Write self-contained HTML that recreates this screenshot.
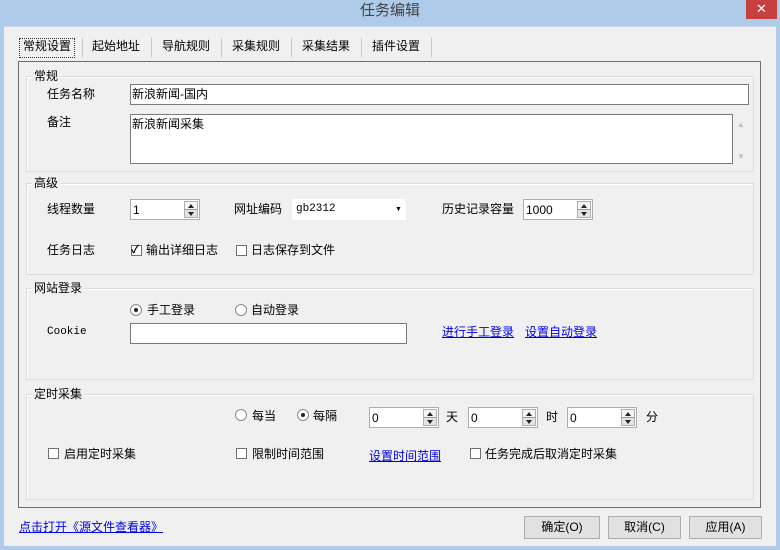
<!DOCTYPE html>
<html><head><meta charset="utf-8"><style>
*{box-sizing:border-box;margin:0;padding:0}
body{width:780px;height:550px;position:relative;overflow:hidden;background:#aecbea;font-family:"Liberation Sans","Noto Sans CJK SC","WenQuanYi Zen Hei",sans-serif;font-size:12px;color:#000}
.a{position:absolute;white-space:nowrap;line-height:14px}
#client{position:absolute;left:4px;top:26px;width:772px;height:520px;background:#f0f0f0;border-top:1px solid #c9d9ec}
.grp{position:absolute;border:1px solid #dcdcdc;box-shadow:inset 1px 1px 0 #fff}
.lab{position:absolute;background:#f0f0f0;padding:0 2px;line-height:14px}
.inp{position:absolute;background:#fff;border:1px solid #7a7a7a;padding:2px 1px;line-height:14px}
.spin{position:absolute;background:#fff;border:1px solid #abadb3;height:21px;padding:3px 2px;line-height:14px}
.spin b{position:absolute;right:1px;top:1px;width:14px;height:17px;background:linear-gradient(#f4f4f4 0 48%,#999 48% 52%,#e4e4e4 52%);border:1px solid #b0b0b0}
.spin b::before{content:"";position:absolute;left:3px;top:2px;border-left:3px solid transparent;border-right:3px solid transparent;border-bottom:4px solid #222}
.spin b::after{content:"";position:absolute;left:3px;top:10px;border-left:3px solid transparent;border-right:3px solid transparent;border-top:4px solid #222}
.cb{position:absolute;width:11px;height:11px;border:1px solid #707070;background:#fff}
.rb{position:absolute;width:12px;height:12px;border:1px solid #8a8a8a;border-radius:50%;background:#fff}
.rb.on::after{content:"";position:absolute;left:3px;top:3px;width:4px;height:4px;border-radius:50%;background:#222}
.lnk{color:#0000ee;text-decoration:underline}
.btn{position:absolute;height:23px;border:1px solid #adadad;background:#e1e1e1;text-align:center;line-height:21px}
.tab{position:absolute;top:38px;line-height:16px}
.sep{position:absolute;top:38px;width:1px;height:19px;background:#c8c8c8}
</style></head><body>
<div class="a" style="left:360px;top:2px;font-size:15px;color:#444;line-height:18px">任务编辑</div>
<div style="position:absolute;left:746px;top:0;width:31px;height:19px;background:#c7403f;color:#fff;text-align:center;font-size:13px;line-height:18px">✕</div>
<div id="client"></div>
<div class="a" style="left:19px;top:38px;width:56px;height:20px;border:1px dotted #333;"></div>
<div class="tab" style="left:23px">常规设置</div>
<div class="sep" style="left:82px"></div>
<div class="tab" style="left:92px">起始地址</div>
<div class="sep" style="left:151px"></div>
<div class="tab" style="left:162px">导航规则</div>
<div class="sep" style="left:221px"></div>
<div class="tab" style="left:232px">采集规则</div>
<div class="sep" style="left:291px"></div>
<div class="tab" style="left:302px">采集结果</div>
<div class="sep" style="left:361px"></div>
<div class="tab" style="left:372px">插件设置</div>
<div class="sep" style="left:431px"></div>
<div style="position:absolute;left:18px;top:61px;width:743px;height:447px;border:1px solid #6f6f6f"></div>
<div class="grp" style="left:26px;top:76px;width:728px;height:96px"></div>
<div class="lab" style="left:32px;top:69px">常规</div>
<div class="grp" style="left:26px;top:183px;width:728px;height:92px"></div>
<div class="lab" style="left:32px;top:176px">高级</div>
<div class="grp" style="left:26px;top:288px;width:728px;height:92px"></div>
<div class="lab" style="left:32px;top:281px">网站登录</div>
<div class="grp" style="left:26px;top:394px;width:728px;height:106px"></div>
<div class="lab" style="left:32px;top:387px">定时采集</div>
<div class="a" style="left:47px;top:87px">任务名称</div>
<div class="inp" style="left:130px;top:84px;width:619px;height:21px">新浪新闻-国内</div>
<div class="a" style="left:47px;top:115px">备注</div>
<div class="inp" style="left:130px;top:114px;width:603px;height:50px">新浪新闻采集</div>
<div class="a" style="left:737px;top:118px;color:#c0c0c0;font-size:8px">▲</div>
<div class="a" style="left:737px;top:150px;color:#c0c0c0;font-size:8px">▼</div>
<div class="a" style="left:47px;top:202px">线程数量</div>
<div class="spin" style="left:130px;top:199px;width:70px">1<b></b></div>
<div class="a" style="left:234px;top:202px">网址编码</div>
<div style="position:absolute;left:292px;top:199px;width:114px;height:21px;background:#fff"></div>
<div class="a" style="left:296px;top:202px;font-size:11px;font-family:'Liberation Mono',monospace">gb2312</div>
<div class="a" style="left:395px;top:203px;font-size:7px">▼</div>
<div class="a" style="left:442px;top:202px">历史记录容量</div>
<div class="spin" style="left:523px;top:199px;width:70px">1000<b></b></div>
<div class="a" style="left:47px;top:243px">任务日志</div>
<div class="cb" style="left:131px;top:245px"></div>
<div class="a" style="left:131px;top:243px;font-size:11px;font-weight:bold">✓</div>
<div class="a" style="left:146px;top:243px">输出详细日志</div>
<div class="cb" style="left:236px;top:245px"></div>
<div class="a" style="left:251px;top:243px">日志保存到文件</div>
<div class="rb on" style="left:130px;top:304px"></div>
<div class="a" style="left:147px;top:303px">手工登录</div>
<div class="rb" style="left:235px;top:304px"></div>
<div class="a" style="left:251px;top:303px">自动登录</div>
<div class="a" style="left:47px;top:325px;font-size:11px;font-family:'Liberation Mono',monospace">Cookie</div>
<div class="inp" style="left:130px;top:323px;width:277px;height:21px"></div>
<div class="a lnk" style="left:442px;top:325px">进行手工登录</div>
<div class="a lnk" style="left:525px;top:325px">设置自动登录</div>
<div class="rb" style="left:235px;top:409px"></div>
<div class="a" style="left:252px;top:409px">每当</div>
<div class="rb on" style="left:297px;top:409px"></div>
<div class="a" style="left:313px;top:409px">每隔</div>
<div class="spin" style="left:369px;top:407px;width:70px">0<b></b></div>
<div class="a" style="left:446px;top:410px">天</div>
<div class="spin" style="left:468px;top:407px;width:70px">0<b></b></div>
<div class="a" style="left:546px;top:410px">时</div>
<div class="spin" style="left:567px;top:407px;width:70px">0<b></b></div>
<div class="a" style="left:646px;top:410px">分</div>
<div class="cb" style="left:48px;top:448px"></div>
<div class="a" style="left:64px;top:447px">启用定时采集</div>
<div class="cb" style="left:236px;top:448px"></div>
<div class="a" style="left:252px;top:447px">限制时间范围</div>
<div class="a lnk" style="left:369px;top:449px">设置时间范围</div>
<div class="cb" style="left:470px;top:448px"></div>
<div class="a" style="left:485px;top:447px">任务完成后取消定时采集</div>
<div class="a lnk" style="left:19px;top:520px">点击打开《源文件查看器》</div>
<div class="btn" style="left:524px;top:516px;width:76px">确定(O)</div>
<div class="btn" style="left:608px;top:516px;width:73px">取消(C)</div>
<div class="btn" style="left:689px;top:516px;width:73px">应用(A)</div>
</body></html>
